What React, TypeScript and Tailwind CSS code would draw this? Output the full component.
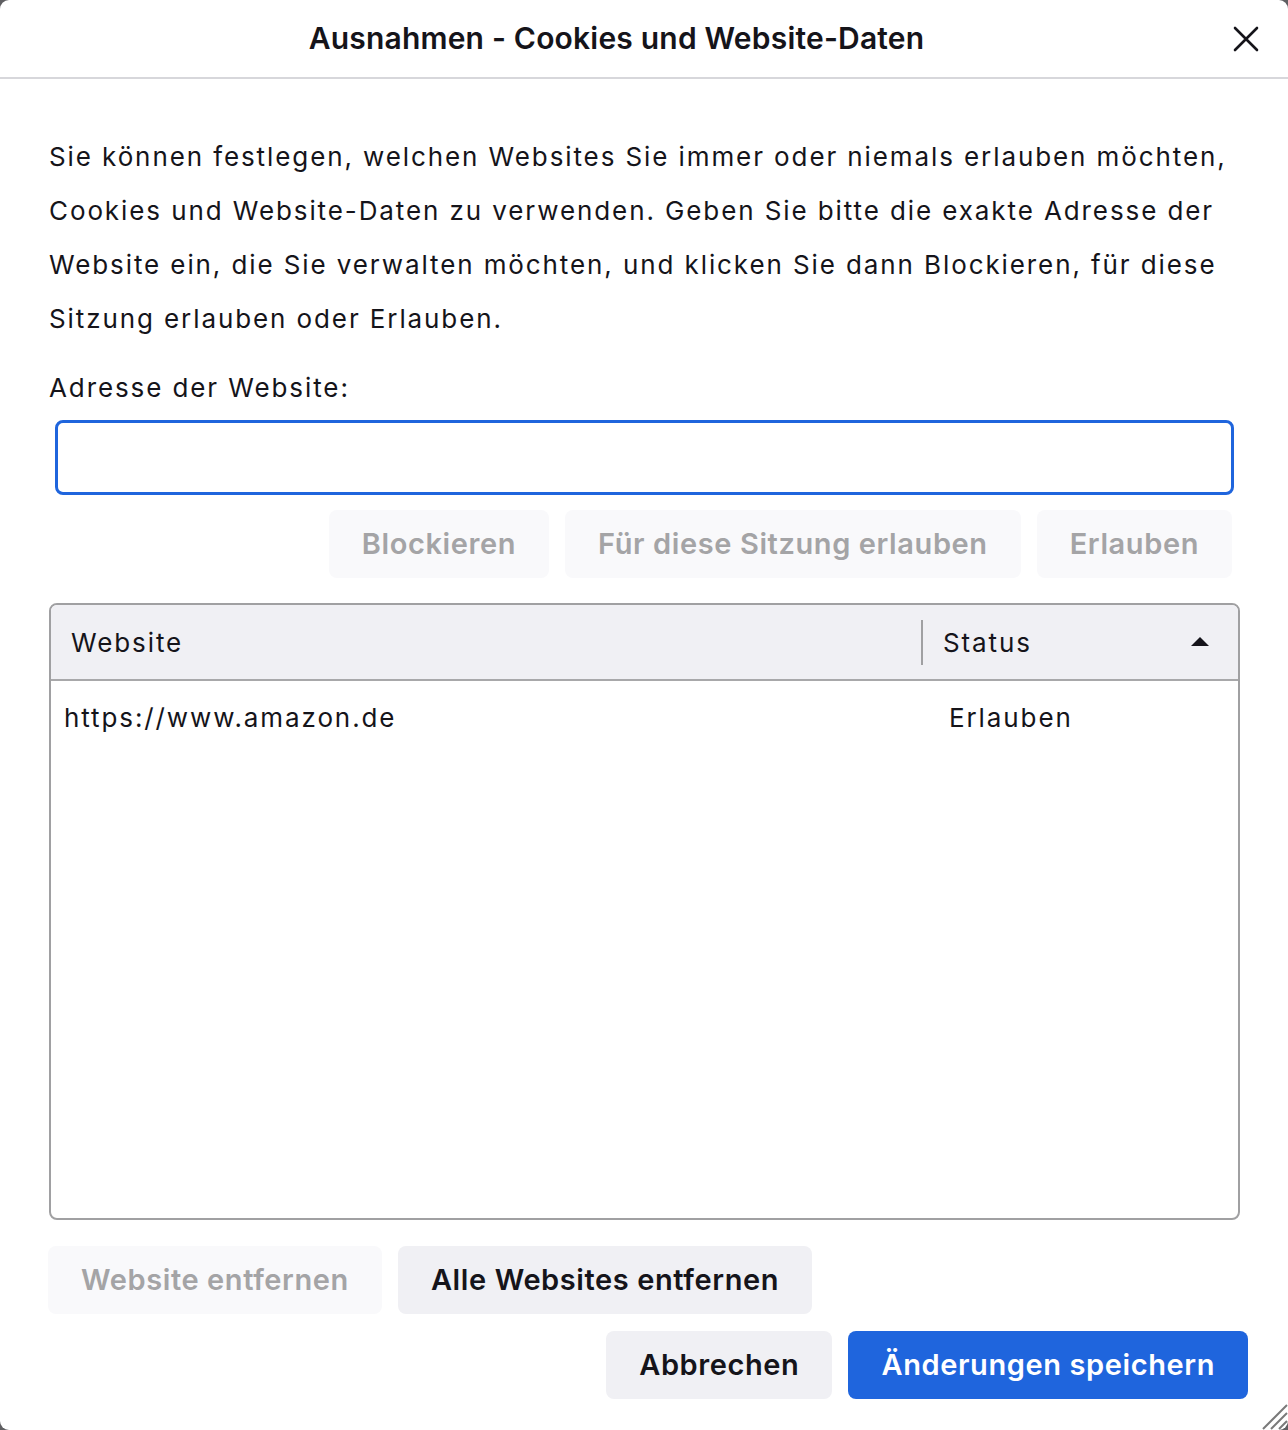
import React from "react";

export default function App() {
  const font = { fontFamily: "Inter, 'Noto Sans', sans-serif" };
  const btn = "h-[68px] px-[33px] rounded-[8px] text-[29px] font-semibold tracking-[0.6px] whitespace-nowrap";
  return (
    <div className="w-[1288px] h-[1430px] bg-[#5f5f62]" style={font}>
      <div className="relative w-full h-full bg-white rounded-[9px] overflow-hidden flex flex-col text-[#15141a]">
        <div className="h-[79px] shrink-0 border-b-2 border-[#d7d7db] flex items-center">
          <div className="flex-1 text-center text-[30px] font-semibold tracking-[0.2px]">Ausnahmen - Cookies und Website-Daten</div>
          <div className="w-[55px] shrink-0 flex items-center">
            <svg width="26" height="26" viewBox="0 0 26 26">
              <path d="M2 2 L24 24 M24 2 L2 24" stroke="#15141a" strokeWidth="2.6" strokeLinecap="round" />
            </svg>
          </div>
        </div>
        <div className="flex flex-col px-[49px] pt-[51px]">
          <p className="text-[26px] leading-[54px] tracking-[1.9px] whitespace-nowrap">
            Sie können festlegen, welchen Websites Sie immer oder niemals erlauben möchten,
            <br />
            Cookies und Website-Daten zu verwenden. Geben Sie bitte die exakte Adresse der
            <br />
            Website ein, die Sie verwalten möchten, und klicken Sie dann Blockieren, für diese
            <br />
            Sitzung erlauben oder Erlauben.
          </p>
          <label className="mt-[22px] text-[26px] leading-[40px] tracking-[1.9px]">Adresse der Website:</label>
          <div className="mt-[12px] ml-[6px] w-[1179px] h-[75px] rounded-[8px] border-[3px] border-[#1f65dd]" />
          <div className="mt-[15px] flex justify-end gap-[16px] pr-[7px]">
            <button className={`${btn} bg-[#f9f9fb] text-[#a4a4a6]`}>Blockieren</button>
            <button className={`${btn} bg-[#f9f9fb] text-[#a4a4a6]`}>Für diese Sitzung erlauben</button>
            <button className={`${btn} bg-[#f9f9fb] text-[#a4a4a6]`}>Erlauben</button>
          </div>
          <div className="mt-[25px] w-[1191px] h-[617px] rounded-[8px] border-2 border-[#a0a0a2] overflow-hidden flex flex-col">
            <div className="h-[76px] shrink-0 bg-[#f0f0f4] border-b-2 border-[#a8a8aa] flex items-center">
              <div className="w-[870px] pl-[20px] text-[26px] tracking-[1.9px]">Website</div>
              <div className="w-[2px] h-[45px] bg-[#a0a0a2]" />
              <div className="flex-1 flex items-center justify-between pl-[20px] pr-[28px] text-[26px] tracking-[1.9px]">
                <span>Status</span>
                <svg width="20" height="10" viewBox="0 0 20 10">
                  <path d="M10 0 L19 9 L1 9 Z" fill="#15141a" />
                </svg>
              </div>
            </div>
            <div className="flex items-center h-[72px] text-[26px] tracking-[1.9px]">
              <div className="w-[898px] pl-[13px]">https://www.amazon.de</div>
              <div>Erlauben</div>
            </div>
          </div>
          <div className="mt-[26px] -ml-[1px] flex gap-[16px]">
            <button className={`${btn} bg-[#f9f9fb] text-[#a4a4a6]`}>Website entfernen</button>
            <button className={`${btn} bg-[#f0f0f4] text-[#15141a]`}>Alle Websites entfernen</button>
          </div>
          <div className="mt-[17px] -mr-[9px] flex justify-end gap-[16px]">
            <button className={`${btn} bg-[#f0f0f4] text-[#15141a]`}>Abbrechen</button>
            <button className={`${btn} bg-[#1f65dd] text-white`}>Änderungen speichern</button>
          </div>
        </div>
        <svg className="absolute right-0 bottom-0" width="28" height="28" viewBox="0 0 28 28">
          <path d="M27 3 L3 27 M27 11 L11 27 M27 19 L19 27" stroke="#7a7a7a" strokeWidth="2" />
        </svg>
      </div>
    </div>
  );
}
